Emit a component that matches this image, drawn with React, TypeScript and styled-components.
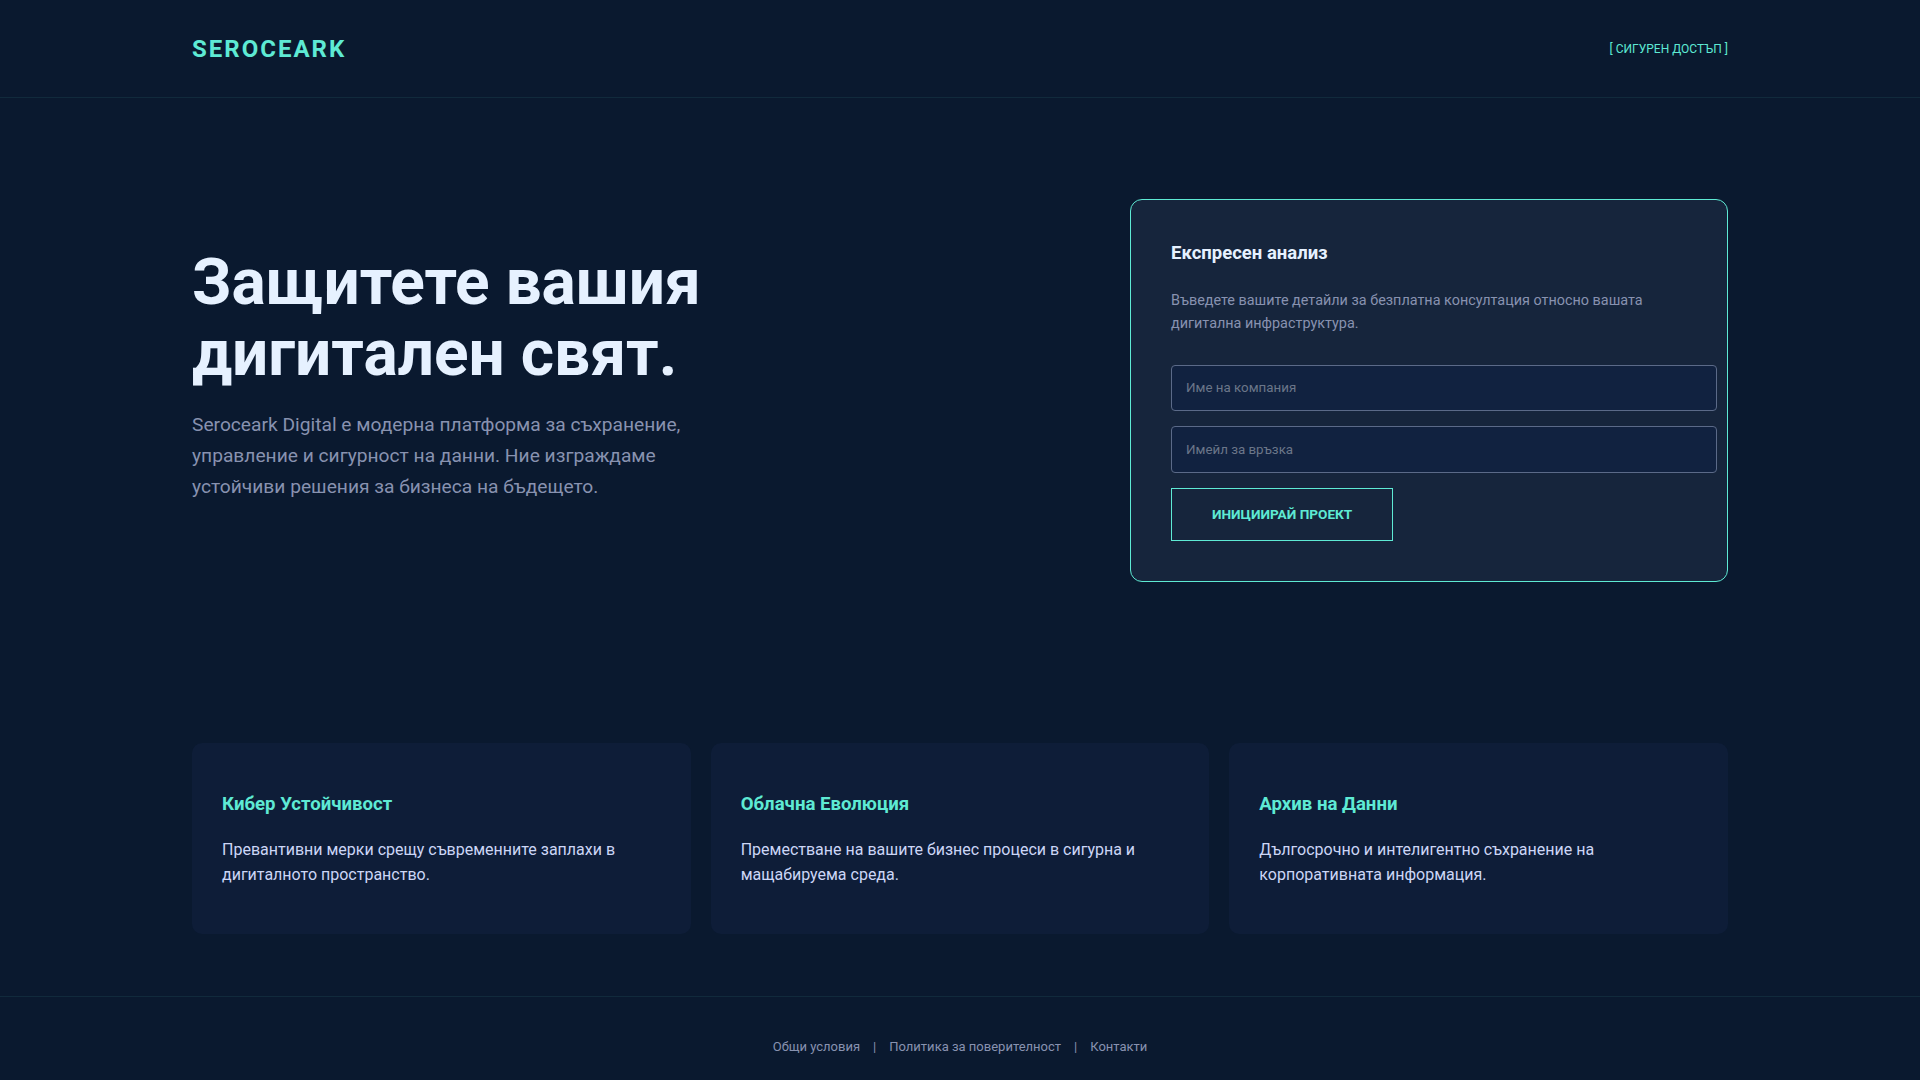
import React from "react";
import styled, { createGlobalStyle } from "styled-components";

const GlobalStyle = createGlobalStyle`
  html, body { margin: 0; padding: 0; }
  body {
    background: #0a192f;
    font-family: Roboto, "Noto Sans", "Liberation Sans", sans-serif;
    color: #ccd6f6;
  }
  * { box-sizing: border-box; }
`;

const accent = "#5eead4";

const Header = styled.header`
  height: 98px;
  border-bottom: 1px solid #112a3c;
`;

const Container = styled.div`
  width: 1536px;
  margin: 0 auto;
`;

const HeaderInner = styled(Container)`
  height: 100%;
  display: flex;
  align-items: center;
  justify-content: space-between;
`;

const Logo = styled.div`
  font-size: 24px;
  font-weight: 700;
  letter-spacing: 2px;
  color: ${accent};
`;

const AccessLink = styled.a`
  font-size: 12px;
  color: ${accent};
  text-decoration: none;
`;

const Hero = styled(Container)`
  display: flex;
  align-items: center;
  justify-content: space-between;
  padding: 101px 0 161px;
`;

const HeroText = styled.div`
  max-width: 600px;
  padding-bottom: 30px;
`;

const Title = styled.h1`
  margin: 0 0 21px;
  font-size: 64px;
  line-height: 1.1;
  font-weight: 700;
  color: #e6f1ff;
`;

const Lead = styled.p`
  margin: 0;
  max-width: 530px;
  font-size: 19.2px;
  line-height: 1.6;
  color: #8892b0;
`;

const FormCard = styled.div`
  width: 598px;
  padding: 40px;
  background: #16253c;
  border: 1px solid ${accent};
  border-radius: 12px;
`;

const FormTitle = styled.h3`
  margin: 0 0 22px;
  font-size: 18.5px;
  line-height: 27px;
  font-weight: 700;
  color: #e6f1ff;
`;

const FormText = styled.p`
  margin: 0 0 29px;
  font-size: 14.4px;
  line-height: 23.3px;
  color: #8892b0;
`;

const Input = styled.input`
  box-sizing: content-box;
  display: block;
  width: 100%;
  height: 16.5px;
  padding: 14px;
  margin: 0 0 15px;
  background: #112240;
  border: 1px solid #5b6a88;
  border-radius: 4px;
  font-family: inherit;
  font-size: 13.333px;
  color: #ccd6f6;
  outline: none;
  &::placeholder { color: #6b7689; }
`;

const SubmitButton = styled.button`
  display: block;
  height: 53px;
  padding: 0 40px;
  background: transparent;
  border: 1px solid ${accent};
  color: ${accent};
  font-family: inherit;
  font-size: 13.6px;
  font-weight: 700;
  cursor: pointer;
`;

const Features = styled(Container)`
  display: grid;
  grid-template-columns: repeat(3, 1fr);
  gap: 20px;
  padding-bottom: 62px;
`;

const FeatureCard = styled.div`
  background: #0e1d38;
  border-radius: 10px;
  padding: 48px 30px 46px;
`;

const FeatureTitle = styled.h3`
  margin: 0 0 19px;
  font-size: 18.6px;
  line-height: 27px;
  font-weight: 700;
  color: ${accent};
`;

const FeatureText = styled.p`
  margin: 0;
  font-size: 16px;
  line-height: 25.6px;
  color: #ccd6f6;
`;

const Footer = styled.footer`
  border-top: 1px solid #112a3c;
  padding: 40px 0;
  display: flex;
  justify-content: center;
  align-items: center;
  font-size: 13px;
  line-height: 20px;
  color: #8892b0;
`;

const FooterLink = styled.a`
  color: #8892b0;
  text-decoration: none;
`;

const Sep = styled.span`
  margin: 0 13px;
`;

const features = [
  {
    title: "Кибер Устойчивост",
    text: "Превантивни мерки срещу съвременните заплахи в дигиталното пространство.",
  },
  {
    title: "Облачна Еволюция",
    text: "Преместване на вашите бизнес процеси в сигурна и мащабируема среда.",
  },
  {
    title: "Архив на Данни",
    text: "Дългосрочно и интелигентно съхранение на корпоративната информация.",
  },
];

export default function App() {
  return (
    <>
      <GlobalStyle />
      <Header>
        <HeaderInner>
          <Logo>SEROCEARK</Logo>
          <AccessLink href="#">[ СИГУРЕН ДОСТЪП ]</AccessLink>
        </HeaderInner>
      </Header>
      <Hero>
        <HeroText>
          <Title>
            Защитете вашия
            <br />
            дигитален свят.
          </Title>
          <Lead>
            Seroceark Digital е модерна платформа за съхранение, управление и
            сигурност на данни. Ние изграждаме устойчиви решения за бизнеса на
            бъдещето.
          </Lead>
        </HeroText>
        <FormCard>
          <FormTitle>Експресен анализ</FormTitle>
          <FormText>
            Въведете вашите детайли за безплатна консултация относно вашата
            дигитална инфраструктура.
          </FormText>
          <Input type="text" placeholder="Име на компания" />
          <Input type="email" placeholder="Имейл за връзка" />
          <SubmitButton type="button">ИНИЦИИРАЙ ПРОЕКТ</SubmitButton>
        </FormCard>
      </Hero>
      <Features>
        {features.map((f) => (
          <FeatureCard key={f.title}>
            <FeatureTitle>{f.title}</FeatureTitle>
            <FeatureText>{f.text}</FeatureText>
          </FeatureCard>
        ))}
      </Features>
      <Footer>
        <FooterLink href="#">Общи условия</FooterLink>
        <Sep>|</Sep>
        <FooterLink href="#">Политика за поверителност</FooterLink>
        <Sep>|</Sep>
        <FooterLink href="#">Контакти</FooterLink>
      </Footer>
    </>
  );
}
